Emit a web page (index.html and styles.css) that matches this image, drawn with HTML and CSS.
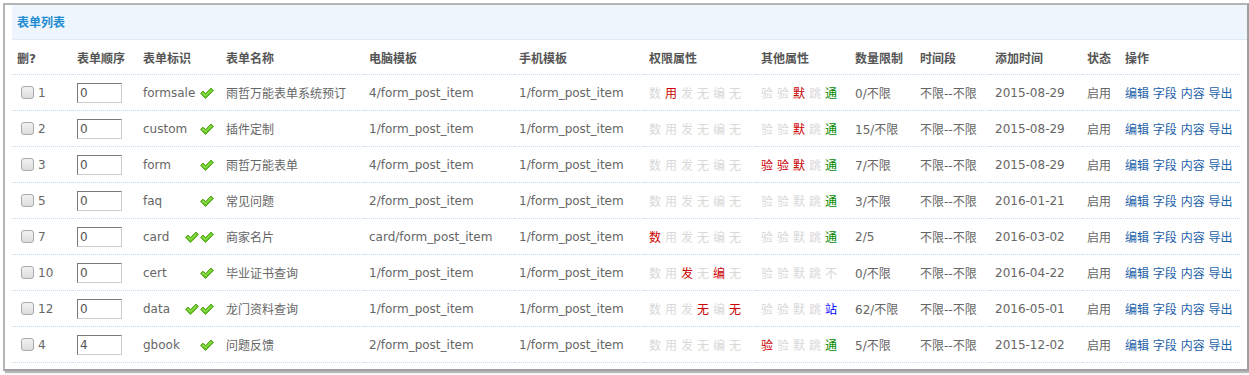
FILE: index.html
```html
<!DOCTYPE html>
<html lang="zh-CN">
<head>
  <meta charset="UTF-8" />
  <title>表单列表</title>
  <link rel="stylesheet" href="styles.css">
</head>
<body>
  <div class="box">
    <div class="box-title">表单列表</div>
    <table class="list">
      <colgroup>
        <col style="width:60px"><col style="width:66px"><col style="width:83px"><col style="width:143px">
        <col style="width:150px"><col style="width:130px"><col style="width:112px"><col style="width:94px">
        <col style="width:65px"><col style="width:75px"><col style="width:92px"><col style="width:38px">
        <col style="width:120px">
      </colgroup>
      <thead>
        <tr>
          <th>删?</th><th>表单顺序</th><th>表单标识</th><th>表单名称</th><th>电脑模板</th><th>手机模板</th>
          <th>权限属性</th><th>其他属性</th><th>数量限制</th><th>时间段</th><th>添加时间</th><th>状态</th><th>操作</th>
        </tr>
      </thead>
      <tbody id="rows"></tbody>
    </table>
  </div>

  <script>
    var check = '<svg class="ok" width="14" height="12" viewBox="0 0 14 12"><path d="M0.5 6.5 L3 4 L5.5 6.5 L11 1 L13.5 3.5 L5.5 11.5 Z" fill="#5dbb1f" stroke="#49a010" stroke-width="0.8"/><path d="M1.8 6.5 L3 5.3 L5.5 7.8 L11 2.3 L12 3.2 L5.5 9.6 Z" fill="#8ee04a"/></svg>';

    // 权限: 数 用 发 无 编 无 / 其他: 验 验 默 跳 + 末位
    var data = [
      { id: 1, ord: 0, key: 'formsale', ok: 1, name: '雨哲万能表单系统预订', pc: '4/form_post_item', perm: '010000', other: '00100', last: ['通', 'g'], num: '0/不限', date: '2015-08-29' },
      { id: 2, ord: 0, key: 'custom', ok: 1, name: '插件定制', pc: '1/form_post_item', perm: '000000', other: '00100', last: ['通', 'g'], num: '15/不限', date: '2015-08-29' },
      { id: 3, ord: 0, key: 'form', ok: 1, name: '雨哲万能表单', pc: '4/form_post_item', perm: '000000', other: '11100', last: ['通', 'g'], num: '7/不限', date: '2015-08-29' },
      { id: 5, ord: 0, key: 'faq', ok: 1, name: '常见问题', pc: '2/form_post_item', perm: '000000', other: '00000', last: ['通', 'g'], num: '3/不限', date: '2016-01-21' },
      { id: 7, ord: 0, key: 'card', ok: 2, name: '商家名片', pc: 'card/form_post_item', perm: '100000', other: '00000', last: ['通', 'g'], num: '2/5', date: '2016-03-02' },
      { id: 10, ord: 0, key: 'cert', ok: 1, name: '毕业证书查询', pc: '1/form_post_item', perm: '001010', other: '00000', last: ['不', 'x'], num: '0/不限', date: '2016-04-22' },
      { id: 12, ord: 0, key: 'data', ok: 2, name: '龙门资料查询', pc: '1/form_post_item', perm: '000101', other: '00000', last: ['站', 'b'], num: '62/不限', date: '2016-05-01' },
      { id: 4, ord: 4, key: 'gbook', ok: 1, name: '问题反馈', pc: '2/form_post_item', perm: '000000', other: '10000', last: ['通', 'g'], num: '5/不限', date: '2015-12-02' }
    ];

    function flags(chars, bits) {
      var out = '';
      for (var i = 0; i < chars.length; i++) {
        out += '<span class="' + (bits[i] === '1' ? 'r' : 'x') + '">' + chars[i] + '</span>';
      }
      return out;
    }

    var html = '';
    data.forEach(function (d) {
      html += '<tr>' +
        '<td><label class="del"><input type="checkbox"> ' + d.id + '</label></td>' +
        '<td><input type="text" class="ord" value="' + d.ord + '"></td>' +
        '<td><div class="key"><span>' + d.key + '</span><span class="oks">' + check.repeat(d.ok) + '</span></div></td>' +
        '<td>' + d.name + '</td>' +
        '<td class="tpl">' + d.pc + '</td>' +
        '<td class="tpl">1/form_post_item</td>' +
        '<td class="flags">' + flags('数用发无编无', d.perm) + '</td>' +
        '<td class="flags">' + flags('验验默跳', d.other) + '<span class="' + d.last[1] + '">' + d.last[0] + '</span></td>' +
        '<td>' + d.num + '</td>' +
        '<td>不限--不限</td>' +
        '<td class="tpl">' + d.date + '</td>' +
        '<td>启用</td>' +
        '<td class="ops"><a href="#">编辑</a> <a href="#">字段</a> <a href="#">内容</a> <a href="#">导出</a></td>' +
        '</tr>';
    });
    document.getElementById('rows').innerHTML = html;
  </script>
</body>
</html>
```

FILE: styles.css
```css
body {
  margin: 0;
  padding: 3px;
  background: #fff;
  font-family: "DejaVu Sans", Verdana, "Noto Sans CJK SC", sans-serif;
  font-size: 12px;
  color: #555;
}
.box {
  width: 1232px;
  border: 2px solid #b4b4b4;
  border-right: 2px solid #a0a0a0;
  border-bottom: 2px solid #a0a0a0;
  box-shadow: 2px 2px 1px #b8b8b8;
  padding: 0 3px 6px 7px;
}
.box-title {
  height: 34px;
  line-height: 34px;
  padding-left: 5px;
  margin-right: -3px;
  background: #eef5fd;
  border-bottom: 1px dotted #cfe0ef;
  color: #1f8cd1;
  font-weight: bold;
  font-family: "Noto Sans CJK SC", sans-serif;
}
.list {
  width: 1228px;
  table-layout: fixed;
  border-collapse: collapse;
}
.list th,
.list td {
  height: 35px;
  padding: 0 0 0 5px;
  text-align: left;
  white-space: nowrap;
  border-bottom: 1px dotted #c6dcee;
  vertical-align: middle;
}
.list th {
  height: 34px;
  font-weight: bold;
  color: #555;
}
.list td {
  color: #666;
}
.del {
  display: flex;
  align-items: center;
  gap: 4px;
  padding-left: 4px;
  color: #666;
}
.del input {
  appearance: none;
  width: 13px;
  height: 13px;
  margin: 0;
  border: 1px solid #aaa;
  border-radius: 3px;
  background: linear-gradient(#f2f2f2, #dcdcdc);
}
.ord {
  width: 45px;
  height: 20px;
  box-sizing: border-box;
  margin: 0;
  padding: 0 2px;
  border: 1px solid #ccc;
  border-top-color: #7a7a7a;
  border-left-color: #7a7a7a;
  font-family: "DejaVu Sans", sans-serif;
  font-size: 12px;
  color: #555;
}
.key {
  display: flex;
  align-items: center;
  justify-content: space-between;
  padding-right: 7px;
}
.oks {
  display: flex;
  gap: 1px;
}
.ok {
  display: block;
}
.tpl {
  color: #5f6670;
}
.flags span {
  display: inline-block;
  width: 12px;
  margin-right: 4px;
  font-family: "Noto Sans CJK SC", sans-serif;
}
.flags .x { color: #d8d8d8; }
.flags .r { color: #c00; }
.flags .g { color: #080; }
.flags .b { color: #00f; }
.ops a {
  color: #1e62a8;
  text-decoration: none;
}
```
